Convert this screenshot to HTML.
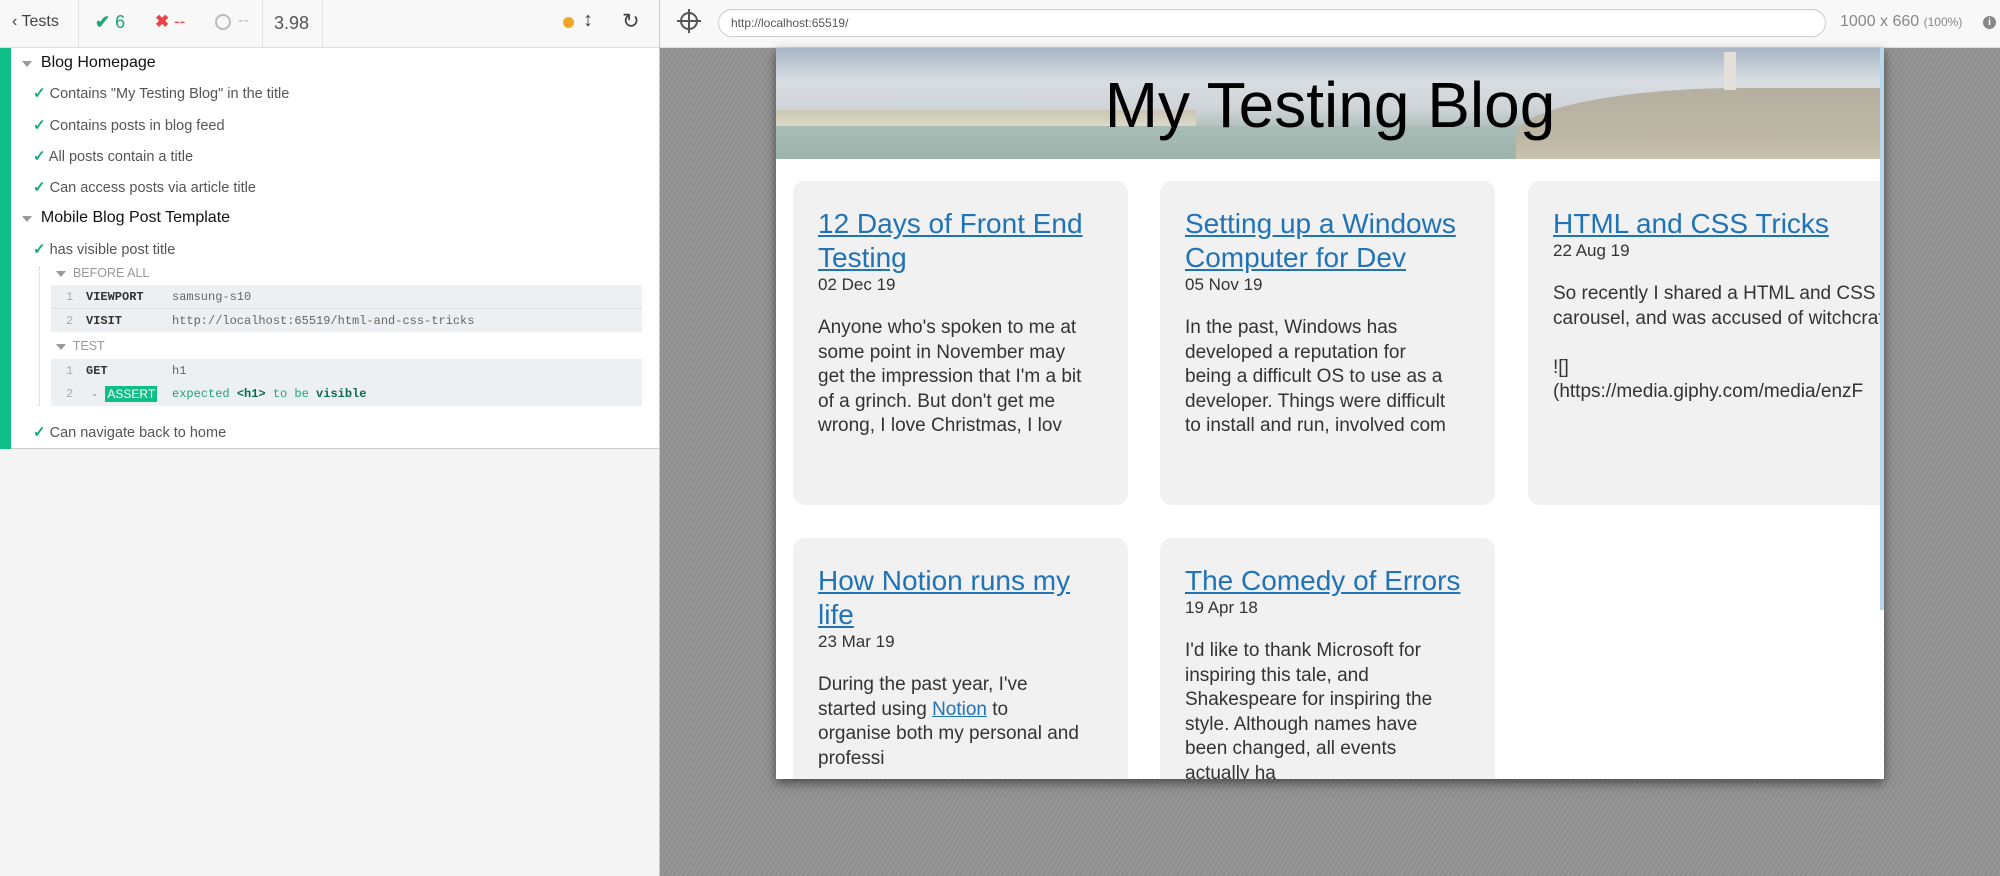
<!DOCTYPE html>
<html><head><meta charset="utf-8">
<style>
*{box-sizing:border-box;margin:0;padding:0}
body{width:2000px;height:876px;overflow:hidden;position:relative;font-family:"Liberation Sans",sans-serif;background:#f4f4f4}
.abs{position:absolute;white-space:nowrap}
#top{position:absolute;left:0;top:0;width:660px;height:48px;background:#f8f8f8;border-bottom:1px solid #ddd}
.dv{position:absolute;top:0;width:1px;height:48px;background:#e0e0e0}
#reporter{position:absolute;left:0;top:48px;width:660px;height:401px;background:#fff;border-bottom:1px solid #ccc}
#bar{position:absolute;left:0;top:48px;width:11px;height:401px;background:#0fbf85}
#sep{position:absolute;left:659px;top:0;width:1px;height:876px;background:#c8c8c8}
.suite{font-size:16px;color:#111}
.test{font-size:14.5px;color:#555}
.ck{color:#0fae79;font-weight:bold;font-size:15px}
.tri{display:inline-block;width:0;height:0;border-left:5px solid transparent;border-right:5px solid transparent;border-top:6px solid #999}
.cmd{position:absolute;left:51px;width:591px;background:#edf0f3;font-family:"Liberation Mono",monospace;font-size:12px}
.row{position:absolute;left:0;height:24px;line-height:24px;width:100%}
.n{position:absolute;left:15px;color:#aaa}
.nm{position:absolute;left:35px;color:#333;font-weight:bold}
.ar{position:absolute;left:121px;color:#666}
#right{position:absolute;left:660px;top:48px;width:1340px;height:828px;background:repeating-linear-gradient(-60deg,#8d8d8d 0,#8d8d8d 2px,#979797 2px,#979797 4px)}
#rtop{position:absolute;left:660px;top:0;width:1340px;height:48px;background:#f8f8f8;border-bottom:1px solid #ddd}
#url{position:absolute;left:718px;top:9px;width:1108px;height:28px;border:1px solid #ccc;border-radius:14px;background:#fff;font-size:12px;color:#555;line-height:26px;padding-left:12px}
#frame{position:absolute;left:776px;top:48px;width:1108px;height:731px;background:#fff;overflow:hidden;box-shadow:0 4px 10px rgba(0,0,0,.5)}
#hdr{position:absolute;left:0;top:0;width:1108px;height:111px;overflow:hidden;background:linear-gradient(180deg,#a9b6c6 0%,#d8dde2 30%,#cfd4d8 55%,#b3c2c0 70%,#a8b7b0 100%)}
#hdr h1{position:absolute;left:0;width:1108px;top:20px;text-align:center;font-weight:normal;font-size:64px;color:#000}
.card{position:absolute;width:335px;background:#f1f1f1;border-radius:12px;padding:26px 25px 0 25px;overflow:hidden}
.card a{display:block;font-size:28px;line-height:34px;color:#1f73b6;text-decoration:underline;white-space:nowrap}
.card .d{font-size:17px;line-height:22px;color:#333;margin-top:-1px}
.card p{font-size:19px;line-height:24.6px;color:#333;margin-top:20px;white-space:nowrap}
.card p a{display:inline;font-size:19px;line-height:24.6px}
</style></head><body>
<div id="top">
 <div class="abs" style="left:12px;top:13px;font-size:16px;color:#444">&#x2039; Tests</div>
 <div class="dv" style="left:78px"></div>
 <div class="abs" style="left:95px;top:12px;font-size:18px;color:#1aa67a"><b>✔</b> 6</div>
 <div class="abs" style="left:155px;top:12px;font-size:17px;color:#e44"><b>✖</b> --</div>
 <div class="abs" style="left:215px;top:14px;width:16px;height:16px;border:2.5px solid #bbb;border-radius:50%"></div>
 <div class="abs" style="left:238px;top:12px;font-size:16px;color:#bbb">--</div>
 <div class="dv" style="left:262px"></div>
 <div class="abs" style="left:274px;top:13px;font-size:18px;color:#555">3.98</div>
 <div class="dv" style="left:322px"></div>
 <div class="abs" style="left:563px;top:17px;width:11px;height:11px;border-radius:50%;background:#f5a623"></div>
 <div class="abs" style="left:583px;top:9px;font-size:20px;color:#444">↕</div>
 <div class="abs" style="left:622px;top:9px;font-size:21px;color:#444">↻</div>
</div>
<div id="reporter">
 <div class="abs suite" style="left:22px;top:6px"><span class="tri"></span>&nbsp; Blog Homepage</div>
 <div class="abs test" style="left:33px;top:36px"><span class="ck">✓</span> Contains "My Testing Blog" in the title</div>
 <div class="abs test" style="left:33px;top:68px"><span class="ck">✓</span> Contains posts in blog feed</div>
 <div class="abs test" style="left:33px;top:99px"><span class="ck">✓</span> All posts contain a title</div>
 <div class="abs test" style="left:33px;top:130px"><span class="ck">✓</span> Can access posts via article title</div>
 <div class="abs suite" style="left:22px;top:161px"><span class="tri"></span>&nbsp; Mobile Blog Post Template</div>
 <div class="abs test" style="left:33px;top:192px"><span class="ck">✓</span> has visible post title</div>
 <div class="abs" style="left:39px;top:219px;width:1px;height:138px;border-left:1px dotted #ccc"></div>
 <div class="abs" style="left:56px;top:218px;font-size:12.5px;color:#999"><span class="tri"></span>&nbsp; BEFORE ALL</div>
 <div class="cmd" style="top:237px;height:47px">
  <div class="row" style="top:0;border-bottom:1px solid #dde1e5"><span class="n">1</span><span class="nm">VIEWPORT</span><span class="ar">samsung-s10</span></div>
  <div class="row" style="top:24px"><span class="n">2</span><span class="nm">VISIT</span><span class="ar">http://localhost:65519/html-and-css-tricks</span></div>
 </div>
 <div class="abs" style="left:56px;top:291px;font-size:12.5px;color:#999"><span class="tri"></span>&nbsp; TEST</div>
 <div class="cmd" style="top:311px;height:47px">
  <div class="row" style="top:0"><span class="n">1</span><span class="nm">GET</span><span class="ar">h1</span></div>
  <div class="row" style="top:23px"><span class="n">2</span><span class="nm" style="left:40px;color:#888;font-weight:normal">- <span style="background:#0fbf85;color:#fff;padding:1px 2px;font-family:'Liberation Sans';font-size:12px">ASSERT</span></span><span class="ar" style="color:#1aa67a">expected <b style="color:#0c6b4c">&lt;h1&gt;</b> to be <b style="color:#0c6b4c">visible</b></span></div>
 </div>
 <div class="abs test" style="left:33px;top:375px"><span class="ck">✓</span> Can navigate back to home</div>
</div>
<div id="bar"></div>
<div id="rtop">
 <div class="abs" style="left:20px;top:12px;width:18px;height:18px;border:2px solid #555;border-radius:50%"></div>
 <div class="abs" style="left:28px;top:9px;width:2px;height:24px;background:#555"></div>
 <div class="abs" style="left:17px;top:20px;width:24px;height:2px;background:#555"></div>
 <div class="abs" style="left:1180px;top:13px;font-size:16px;color:#888">1000 x 660 <span style="font-size:12px">(100%)</span></div>
 <div class="abs" style="left:1323px;top:16px;width:13px;height:13px;border-radius:50%;background:#888;color:#fff;font-size:10px;text-align:center;line-height:13px;font-weight:bold">i</div>
</div>
<div id="url">http://localhost:65519/</div>
<div id="right"></div>
<div id="sep"></div>
<div id="frame">
 <div id="hdr">
  <div class="abs" style="left:0;top:62px;width:420px;height:20px;background:linear-gradient(180deg,#c9c6b4,#e2dccb)"></div>
  <div class="abs" style="left:0;top:78px;width:760px;height:33px;background:linear-gradient(180deg,#a9bcb6,#9db3ac)"></div>
  <div class="abs" style="left:740px;top:40px;width:380px;height:80px;border-radius:60% 0 0 0;background:linear-gradient(180deg,#b4afa0,#bdb6a4 60%,#cfc6b4)"></div>
  <div class="abs" style="left:948px;top:4px;width:12px;height:38px;background:#e2e0d8"></div>
  <h1>My Testing Blog</h1>
 </div>
 <div class="card" style="left:17px;top:133px;height:324px"><a>12 Days of Front End<br>Testing</a><div class="d">02 Dec 19</div><p>Anyone who's spoken to me at<br>some point in November may<br>get the impression that I'm a bit<br>of a grinch. But don't get me<br>wrong, I love Christmas, I lov</p></div>
 <div class="card" style="left:384px;top:133px;height:324px"><a>Setting up a Windows<br>Computer for Dev</a><div class="d">05 Nov 19</div><p>In the past, Windows has<br>developed a reputation for<br>being a difficult OS to use as a<br>developer. Things were difficult<br>to install and run, involved com</p></div>
 <div class="card" style="left:752px;top:133px;height:324px;width:352px;border-radius:12px 0 0 12px"><a>HTML and CSS Tricks</a><div class="d">22 Aug 19</div><p>So recently I shared a HTML and CSS<br>carousel, and was accused of witchcraft<br><br>![]<br>(https://media.giphy.com/media/enzF</p></div>
 <div class="card" style="left:17px;top:490px;height:300px"><a>How Notion runs my<br>life</a><div class="d">23 Mar 19</div><p>During the past year, I've<br>started using <a>Notion</a> to<br>organise both my personal and<br>professi</p></div>
 <div class="card" style="left:384px;top:490px;height:300px"><a>The Comedy of Errors</a><div class="d">19 Apr 18</div><p>I'd like to thank Microsoft for<br>inspiring this tale, and<br>Shakespeare for inspiring the<br>style. Although names have<br>been changed, all events<br>actually ha</p></div>
 <div class="abs" style="left:1104px;top:111px;width:4px;height:620px;background:#fff"></div>
 <div class="abs" style="left:1104px;top:0;width:4px;height:562px;background:#b7d7ea"></div>
</div>
</body></html>
